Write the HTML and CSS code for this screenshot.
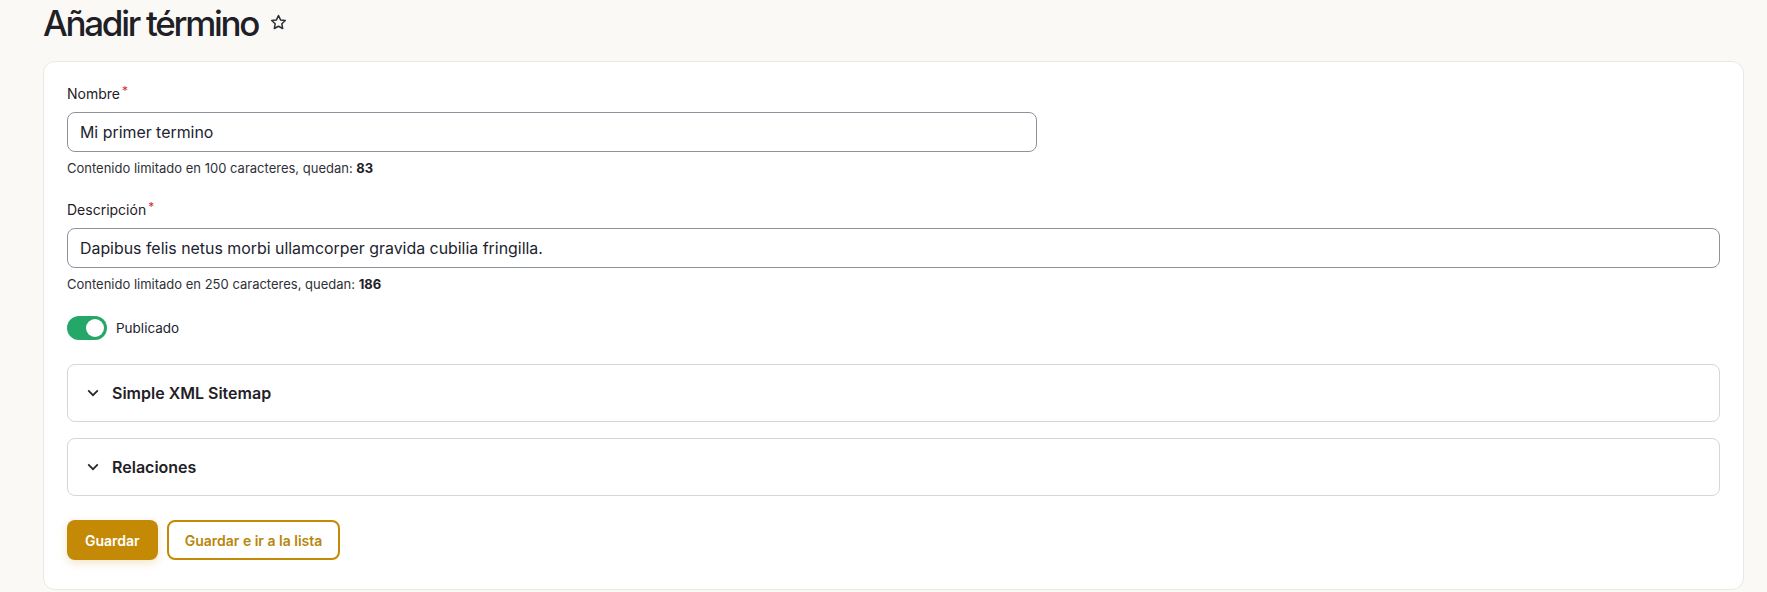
FILE: index.html
```html
<!DOCTYPE html>
<html lang="es">
<head>
    <meta charset="UTF-8">
    <title>Añadir término</title>
    <link rel="stylesheet" href="styles.css">
</head>
<body>
    <div class="page">
        <h1 class="title">Añadir término
            <svg class="star" width="19" height="19" viewBox="0 0 24 24"><path d="M12 3.2l2.6 5.5 6 .8-4.4 4.1 1.1 6L12 16.7l-5.3 2.9 1.1-6-4.4-4.1 6-.8z" fill="none" stroke="#2b2f36" stroke-width="1.9" stroke-linejoin="round"/></svg>
        </h1>

        <form class="card">
            <div class="field">
                <label class="label">Nombre<span class="req">*</span></label>
                <input class="input short" type="text" value="Mi primer termino">
                <div class="help">Contenido limitado en 100 caracteres, quedan: <b>83</b></div>
            </div>

            <div class="field">
                <label class="label">Descripción<span class="req">*</span></label>
                <input class="input" type="text" value="Dapibus felis netus morbi ullamcorper gravida cubilia fringilla.">
                <div class="help">Contenido limitado en 250 caracteres, quedan: <b>186</b></div>
            </div>

            <div class="toggle-row">
                <span class="toggle"><span class="knob"></span></span>
                <span>Publicado</span>
            </div>

            <div class="details">
                <svg class="chev" width="12" height="8" viewBox="0 0 12 8"><path d="M1.2 1.4L6 6.2l4.8-4.8" fill="none" stroke="#22262c" stroke-width="1.7"/></svg>
                <span>Simple XML Sitemap</span>
            </div>
            <div class="details">
                <svg class="chev" width="12" height="8" viewBox="0 0 12 8"><path d="M1.2 1.4L6 6.2l4.8-4.8" fill="none" stroke="#22262c" stroke-width="1.7"/></svg>
                <span>Relaciones</span>
            </div>

            <div class="actions">
                <button class="btn primary" type="button">Guardar</button>
                <button class="btn secondary" type="button">Guardar e ir a la lista</button>
            </div>
        </form>
    </div>
</body>
</html>
```

FILE: styles.css
```css
body{margin:0; background:#faf9f6; font-family:Inter, "Noto Sans", sans-serif; color:#222330;}

.page{padding:0 23px 0 43px;}

.title{margin:0 0 18px; padding-top:3px; font-size:35px; line-height:40px; font-weight:500; letter-spacing:-2.3px; color:#1e2026; display:flex; align-items:center;}
.star{margin-left:11px; margin-top:-2px;}

.card{background:#fff; border:1px solid #ebe8e2; border-radius:12px; padding:23px 23px 29px 23px;}

.field{margin-bottom:25px;}
.field + .field{margin-bottom:24px;}
.label{display:block; font-size:14px; font-weight:400; line-height:18px; margin-bottom:8px; color:#1f2127;}
.req{color:#d12f3a; margin-left:2px; position:relative; top:-4px; font-size:12px;}

.input{display:block; box-sizing:border-box; width:100%; height:40px; padding:0 12px; border:1px solid #8e929c; border-radius:8px; font-family:inherit; font-size:15.9px; color:#222330; background:#fff;}
.input.short{width:970px;}
.help{font-size:13px; line-height:16px; margin-top:8px; color:#2f3137;}
.help b{font-weight:700; color:#1f2127;}

.toggle-row{display:flex; align-items:center; gap:9px; height:24px; font-size:13.5px; margin-bottom:24px;}
.toggle{width:40px; height:24px; border-radius:12px; background:#26a76a; display:flex; justify-content:flex-end; align-items:center; padding:0 3px; box-sizing:border-box;}
.knob{width:18px; height:18px; border-radius:50%; background:#fff;}

.details{height:58px; box-sizing:border-box; border:1px solid #d6d6d8; border-radius:8px; display:flex; align-items:center; gap:13px; padding-left:19px; font-size:16px; font-weight:600; color:#1f2127; margin-bottom:16px;}
.details + .details{margin-bottom:24px;}

.actions{display:flex; gap:9px;}
.btn{height:40px; border-radius:8px; font-family:inherit; font-size:14px; font-weight:600; cursor:pointer;}
.primary{background:#c48a06; color:#fff; border:none; padding:0 18px; box-shadow:0 3px 8px rgba(196,138,6,0.22);}
.secondary{background:#fff; color:#b8860b; border:2px solid #c48a06; padding:0 16px;}
```
